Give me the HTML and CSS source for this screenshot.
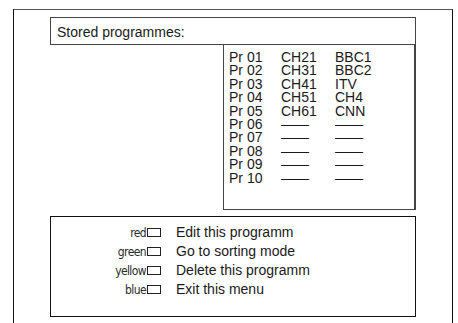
FILE: index.html
```html
<!DOCTYPE html>
<html lang="en">
<head>
  <meta charset="UTF-8" />
  <title>Stored programmes</title>
  <link rel="stylesheet" href="styles.css">
</head>
<body>

<div class="frame">
  <div class="header">Stored programmes:</div>

  <div class="prog-list">
    <span>Pr 01</span><span>CH21</span><span>BBC1</span>
    <span>Pr 02</span><span>CH31</span><span>BBC2</span>
    <span>Pr 03</span><span>CH41</span><span>ITV</span>
    <span>Pr 04</span><span>CH51</span><span>CH4</span>
    <span>Pr 05</span><span>CH61</span><span>CNN</span>
    <span>Pr 06</span><span class="dash">––––</span><span class="dash">––––</span>
    <span>Pr 07</span><span class="dash">––––</span><span class="dash">––––</span>
    <span>Pr 08</span><span class="dash">––––</span><span class="dash">––––</span>
    <span>Pr 09</span><span class="dash">––––</span><span class="dash">––––</span>
    <span>Pr 10</span><span class="dash">––––</span><span class="dash">––––</span>
  </div>

  <div class="keys">
    <div class="key-row"><span class="key-name">red</span><span class="key-box"></span><span class="key-text">Edit this programm</span></div>
    <div class="key-row"><span class="key-name">green</span><span class="key-box"></span><span class="key-text">Go to sorting mode</span></div>
    <div class="key-row"><span class="key-name">yellow</span><span class="key-box"></span><span class="key-text">Delete this programm</span></div>
    <div class="key-row"><span class="key-name">blue</span><span class="key-box"></span><span class="key-text">Exit this menu</span></div>
  </div>
</div>

</body>
</html>
```

FILE: styles.css
```css
body {
  margin: 0;
  background: #fff;
  color: #1a1a1a;
  font-family: "Liberation Sans", Arial, sans-serif;
  font-size: 14px;
  overflow: hidden;
}

.frame {
  box-sizing: border-box;
  width: 440px;
  height: 330px;
  margin: 9px 0 0 13px;
  padding: 7px 36px 0 36px;
  border: 1px solid #111;
  border-top: 1px solid #555;
  border-bottom: none;
}

.header {
  box-sizing: border-box;
  width: 366px;
  height: 28px;
  padding: 1px 0 0 6px;
  line-height: 26px;
  border: 1px solid #444;
}

.prog-list {
  box-sizing: border-box;
  width: 193px;
  height: 166px;
  margin: -1px 0 0 173px;
  padding: 6px 0 0 5px;
  border: 1px solid #444;
  border-right-width: 2px;
  display: grid;
  grid-template-columns: 52px 54px auto;
  grid-auto-rows: 13.4px;
  line-height: 13.4px;
}

.dash {
  letter-spacing: -1px;
}

.keys {
  box-sizing: border-box;
  width: 366px;
  height: 101px;
  margin-top: 6px;
  padding-top: 6px;
  border: 1px solid #111;
}

.key-row {
  display: flex;
  align-items: baseline;
  height: 19px;
  line-height: 19px;
}

.key-name {
  width: 95px;
  text-align: right;
  font-family: "DejaVu Sans Condensed", "Liberation Sans", sans-serif;
  font-stretch: condensed;
  font-size: 12px;
  letter-spacing: -0.6px;
  color: #2a2a2a;
}

.key-box {
  box-sizing: border-box;
  display: inline-block;
  width: 14px;
  height: 9px;
  margin: 0 15px 0 1px;
  border: 1px solid #222;
}
```
